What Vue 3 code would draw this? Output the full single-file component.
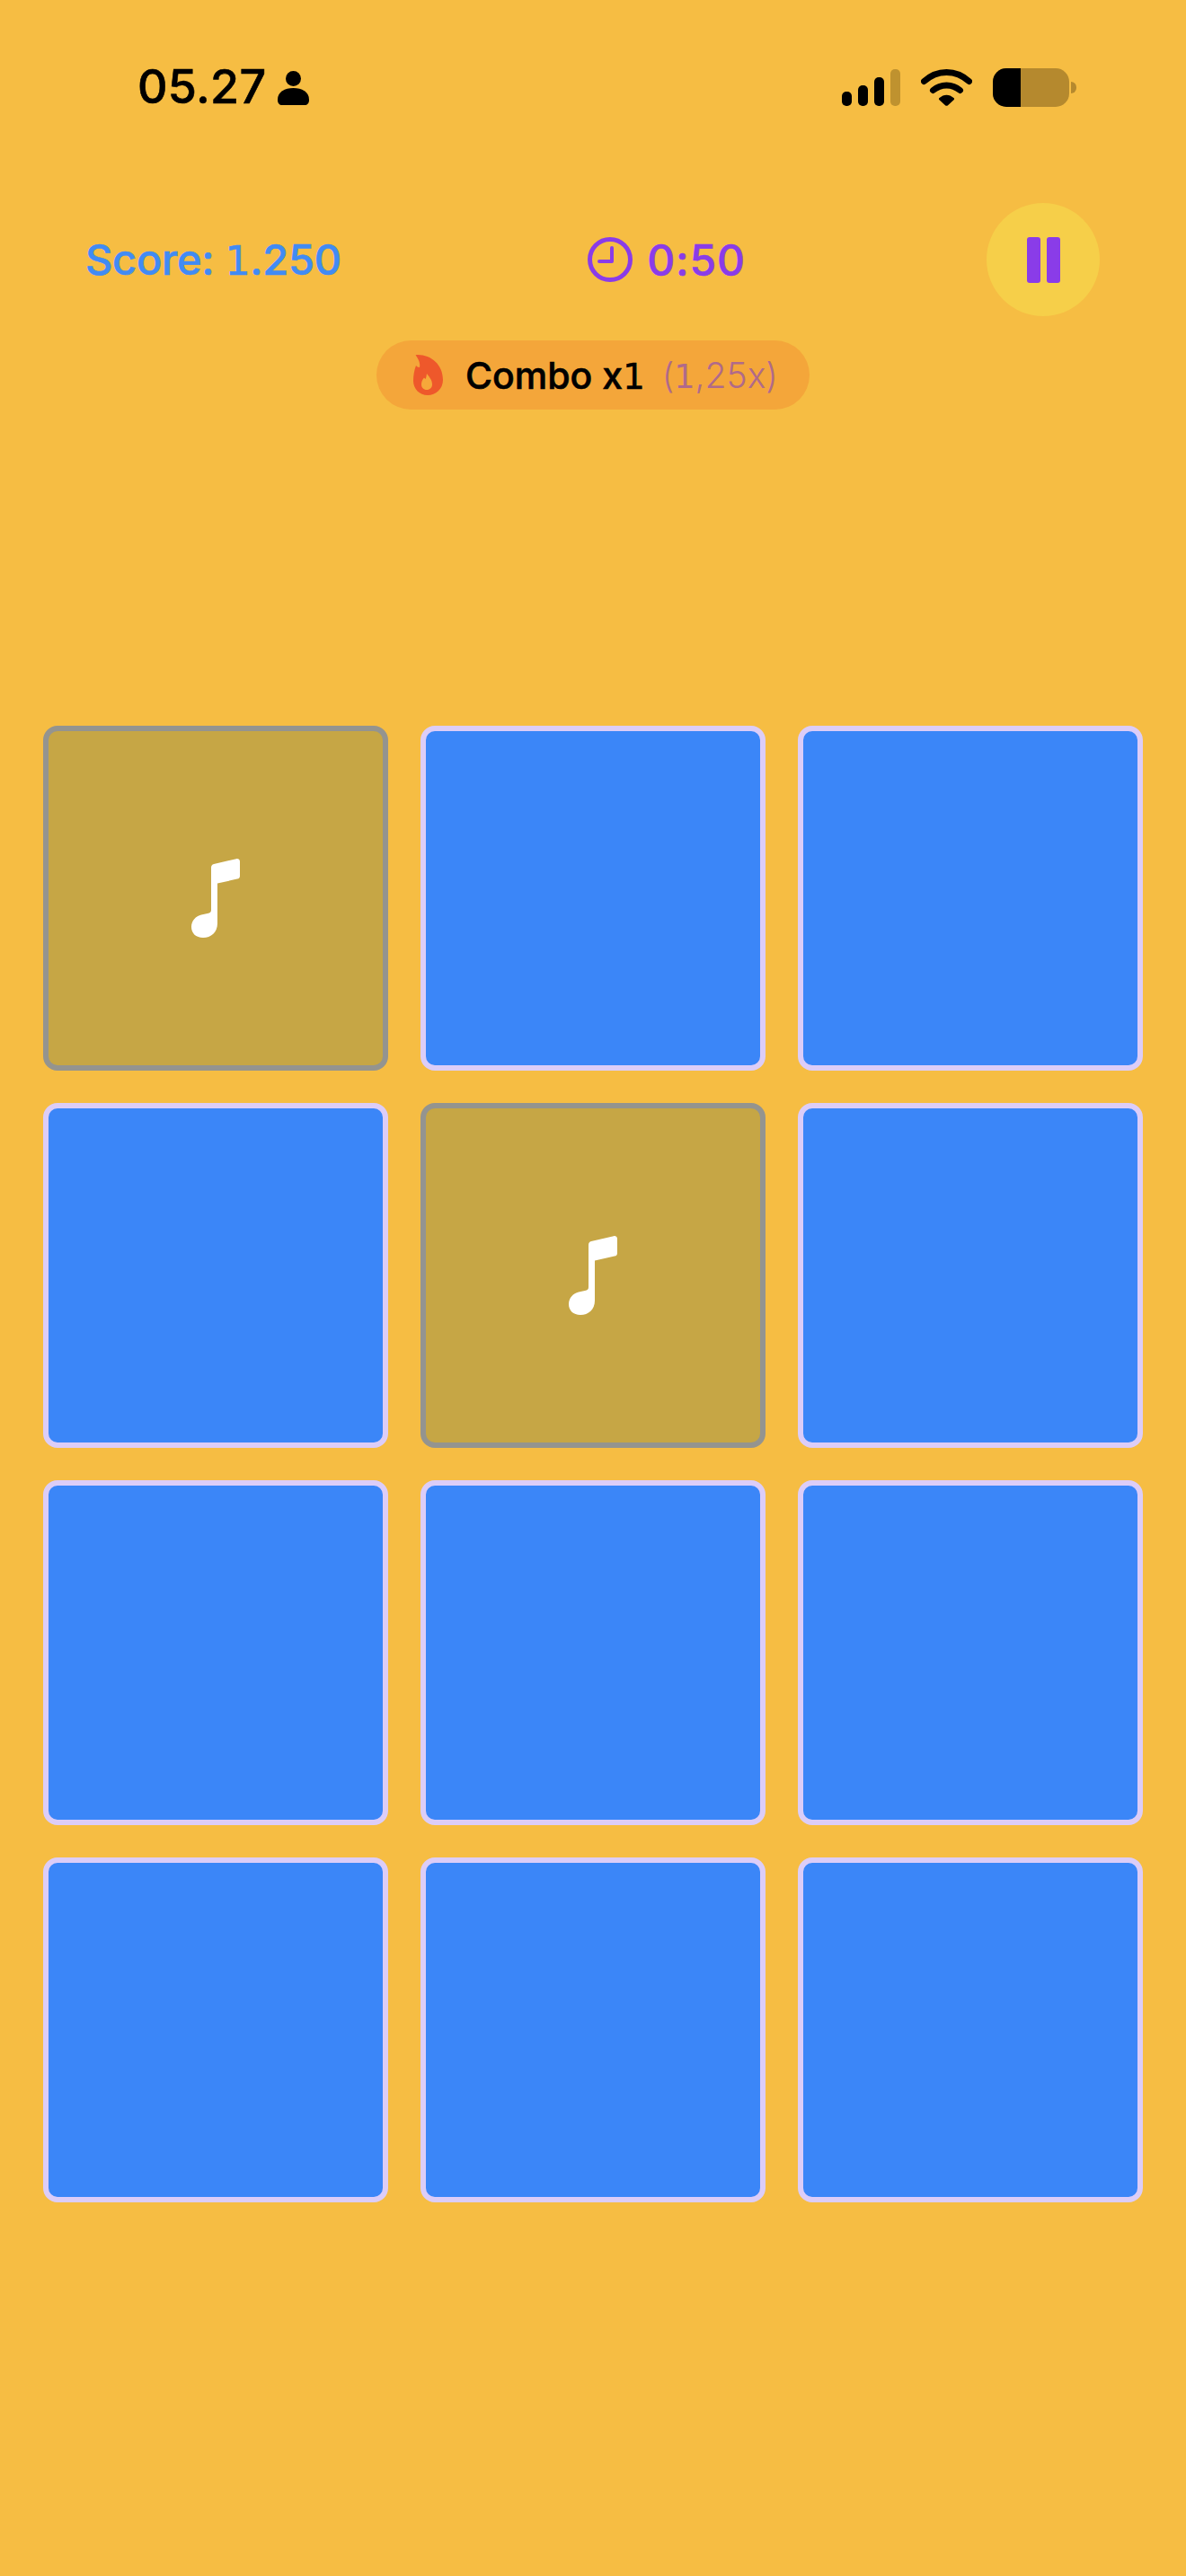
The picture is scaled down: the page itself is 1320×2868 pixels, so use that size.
<script setup>
// 12 cards, the two flipped ones show a note
const cards = Array.from({ length: 12 }, (_, i) => ({
    id: i,
    flipped: i === 0 || i === 4,
}));
const signalBars = [16, 23, 32, 41];
</script>

<template>
    <main class="game">
        <header class="status-bar">
            <div class="status-left">
                <span class="clock-text">05.27</span>
                <svg class="person" viewBox="0 0 35 38" width="35" height="38">
                    <circle cx="17.5" cy="8.5" r="8.5" fill="#000" />
                    <path d="M0 32c0-9 8-13 17.500-13S35 23 35 32c0 4-2 6-5 6H5c-3 0-5-2-5-6z" fill="#000" />
                </svg>
            </div>
            <div class="status-right">
                <div class="signal">
                    <span
                        v-for="(h, i) in signalBars"
                        :key="i"
                        class="signal-bar"
                        :class="{ dim: i === 3 }"
                        :style="{ height: h + 'px' }"
                    ></span>
                </div>
                <svg class="wifi" viewBox="0 0 57 42" width="57" height="42">
                    <path d="M3.500 14.500C18 1 39 1 53.500 14.500" fill="none" stroke="#000" stroke-width="7" stroke-linecap="round" />
                    <path d="M13.500 24.500C22 17 35 17 43.500 24.500" fill="none" stroke="#000" stroke-width="7" stroke-linecap="round" />
                    <path d="M20.500 33c5-4.500 11-4.500 16 0 .8.800.8 1.500 0 2.200l-6.500 6c-.9.800-2.100.800-3 0l-6.500-6c-.8-.700-.8-1.400 0-2.200z" fill="#000" />
                </svg>
                <div class="battery">
                    <div class="battery-body"><div class="battery-level"></div></div>
                    <div class="battery-nub"></div>
                </div>
            </div>
        </header>

        <section class="score-row">
            <div class="score">Score: <span class="one">1</span>.250</div>
            <div class="timer">
                <svg viewBox="0 0 50 50" width="50" height="50">
                    <circle cx="25" cy="25" r="22.500" fill="none" stroke="#8a3ce8" stroke-width="5" />
                    <path d="M27 12v15H13" fill="none" stroke="#8a3ce8" stroke-width="4" stroke-linecap="round" stroke-linejoin="round" />
                </svg>
                <span>0:50</span>
            </div>
            <button class="pause" type="button">
                <span></span>
                <span></span>
            </button>
        </section>

        <div class="combo">
            <svg class="flame" viewBox="0 0 34 45" width="34" height="45">
                <path d="M4 1C3 0 4 0 6 0c15 0 28 11 28 28 0 10-8 17-17 17S1 38 1 29c0-6 1-12 3-17 1 1 2 2 4 2C9 10 7 5 4 1z" fill="#ee582b" />
                <path d="M16 21c-.5 2.500-.5 4.500-1.500 6-.7-.5-1-1-1.500-1.500C11 28 10 30 10 33c0 3.500 2.500 6 6 6s6-2.500 6-6c0-5-3-8-6-12z" fill="#f6a83a" />
            </svg>
            <span class="combo-label">Combo x<span class="one">1</span></span>
            <span class="combo-mult">(<span class="one">1</span>,25x)</span>
        </div>

        <section class="board">
            <div
                v-for="card in cards"
                :key="card.id"
                class="card"
                :class="{ flipped: card.flipped }"
            >
                <svg v-if="card.flipped" viewBox="0 0 54 88" width="54" height="88">
                    <path d="M22 10c0-2 1-3.500 3-4L50 .2c2-.4 4 .8 4 3v16c0 2-1 3-3 3.400L29 27.500V72c0 10-7 16-16 16C5 88 0 83 0 76c0-7 5-12 11-13.500l8-1.700c2-.5 3-1.500 3-3.800z" fill="#fff" />
                </svg>
            </div>
        </section>
    </main>
</template>

<style>
body {
    background: #f6bd43;
}
</style>

<style scoped>
.game {
    width: 1320px;
    height: 2868px;
    background: #f6bd43;
    font-family: Inter, "Liberation Sans", sans-serif;
    overflow: hidden;
}

/* the reference's 1 has a foot, Inter's does not */
.one {
    font-family: "DejaVu Sans", sans-serif;
    font-size: 0.94em;
    font-weight: 400;
}

.status-bar {
    display: flex;
    justify-content: space-between;
    align-items: center;
    height: 226px;
    padding: 0 122px 0 153px;
    box-sizing: border-box;
}

.status-left {
    display: flex;
    align-items: center;
    gap: 13px;
    margin-bottom: 32px;
}

.clock-text {
    font-size: 52px;
    font-weight: 500;
    line-height: 1;
    letter-spacing: 0.3px;
    color: #000;
    -webkit-text-stroke: 0.6px #000;
}

.person {
    margin-top: 1px;
}

.status-right {
    display: flex;
    align-items: center;
    gap: 23px;
    margin-bottom: 32px;
}

.signal {
    display: flex;
    align-items: flex-end;
    gap: 7px;
    height: 41px;
}

.signal-bar {
    width: 11px;
    background: #000;
    border-radius: 5px;
}

.signal-bar.dim {
    background: #bf922f;
}

.battery {
    display: flex;
    align-items: center;
    gap: 2px;
}

.battery-body {
    width: 85px;
    height: 43px;
    border-radius: 15px;
    background: #b5892e;
    overflow: hidden;
}

.battery-level {
    width: 31px;
    height: 100%;
    background: #000;
}

.battery-nub {
    width: 6px;
    height: 13px;
    border-radius: 0 6px 6px 0;
    background: #b5892e;
}

.score-row {
    display: flex;
    justify-content: space-between;
    align-items: center;
    padding: 0 96px 0 95px;
}

.score {
    width: 283px;
    font-size: 47px;
    font-weight: 500;
    line-height: 1;
    white-space: nowrap;
    letter-spacing: -0.3px;
    color: #418bf4;
    -webkit-text-stroke: 0.6px #418bf4;
}

.timer {
    display: flex;
    align-items: center;
    gap: 16px;
    margin-left: 8px;
    font-size: 48px;
    font-weight: 500;
    letter-spacing: 0.8px;
    color: #8a3ce8;
    -webkit-text-stroke: 0.6px #8a3ce8;
}

.pause {
    display: flex;
    align-items: center;
    justify-content: center;
    gap: 7px;
    width: 126px;
    height: 126px;
    padding: 0;
    border: none;
    border-radius: 50%;
    background: #f6cf49;
}

.pause span {
    width: 15px;
    height: 51px;
    border-radius: 3px;
    background: #8a3ce8;
}

.combo {
    display: flex;
    align-items: center;
    width: 482px;
    height: 77px;
    margin: 27px auto 0;
    padding-left: 40px;
    box-sizing: border-box;
    border-radius: 39px;
    background: #f4a63a;
}

.combo-label {
    margin-left: 25px;
    font-size: 41px;
    font-weight: 500;
    color: #000;
    -webkit-text-stroke: 0.6px #000;
}

.combo-mult {
    margin-left: 19px;
    font-size: 39px;
    font-weight: 300;
    color: #b06a8a;
}

.board {
    display: grid;
    grid-template-columns: repeat(3, 384px);
    gap: 36px;
    margin-top: 352px;
    padding: 0 48px;
}

.card {
    display: flex;
    align-items: center;
    justify-content: center;
    height: 384px;
    box-sizing: border-box;
    border: 6px solid #dccdf8;
    border-radius: 16px;
    background: #3b86f8;
}

.card.flipped {
    border-color: #94948f;
    background: #c6a645;
}
</style>
